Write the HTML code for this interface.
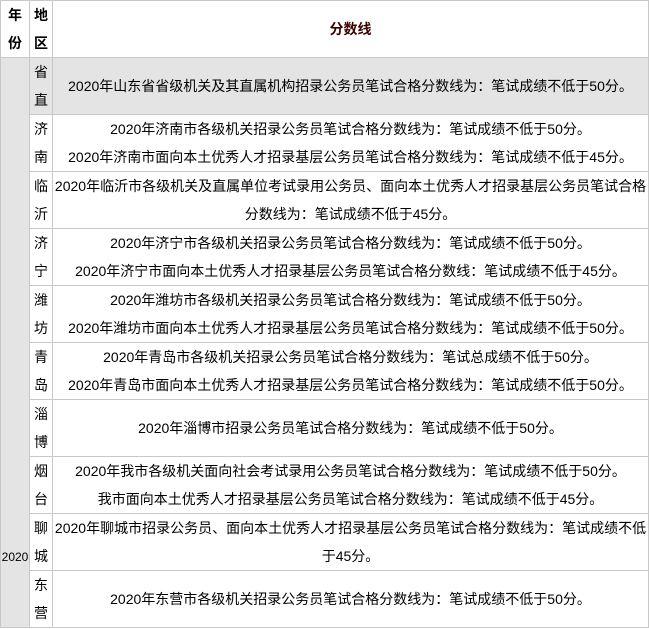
<!DOCTYPE html>
<html><head><meta charset="utf-8"><style>
body{margin:0;background:#fff;font-family:"Liberation Sans","Noto Sans CJK SC",sans-serif;font-size:14px;color:#000}
table{border-collapse:collapse;position:absolute;left:0;top:0;width:649px;table-layout:fixed}
td{border:1px solid #c8c8c8;padding:0;height:56px;line-height:28px;text-align:center;vertical-align:middle}
td.t{padding:0 1px}
.h td{font-weight:bold;font-size:14px}
.g{background:#e4e4e4}
</style></head><body>
<table>
<col style="width:29px"><col style="width:23px"><col>
<tr class="h"><td>年<br>份</td><td>地<br>区</td><td style="color:#3a0000">分数线</td></tr>
<tr><td rowspan="10" class="g" style="vertical-align:bottom;font-size:12px;padding-bottom:56px">2020</td><td class="g">省<br>直</td><td class="g t">2020年山东省省级机关及其直属机构招录公务员笔试合格分数线为：笔试成绩不低于50分。</td></tr>
<tr><td>济<br>南</td><td class="t">2020年济南市各级机关招录公务员笔试合格分数线为：笔试成绩不低于50分。<br>2020年济南市面向本土优秀人才招录基层公务员笔试合格分数线为：笔试成绩不低于45分。</td></tr>
<tr><td>临<br>沂</td><td class="t">2020年临沂市各级机关及直属单位考试录用公务员、面向本土优秀人才招录基层公务员笔试合格分数线为：笔试成绩不低于45分。</td></tr>
<tr><td>济<br>宁</td><td class="t">2020年济宁市各级机关招录公务员笔试合格分数线为：笔试成绩不低于50分。<br>2020年济宁市面向本土优秀人才招录基层公务员笔试合格分数线：笔试成绩不低于45分。</td></tr>
<tr><td>潍<br>坊</td><td class="t">2020年潍坊市各级机关招录公务员笔试合格分数线为：笔试成绩不低于50分。<br>2020年潍坊市面向本土优秀人才招录基层公务员笔试合格分数线为：笔试成绩不低于50分。</td></tr>
<tr><td>青<br>岛</td><td class="t">2020年青岛市各级机关招录公务员笔试合格分数线为：笔试总成绩不低于50分。<br>2020年青岛市面向本土优秀人才招录基层公务员笔试合格分数线为：笔试成绩不低于50分。</td></tr>
<tr><td>淄<br>博</td><td class="t">2020年淄博市招录公务员笔试合格分数线为：笔试成绩不低于50分。</td></tr>
<tr><td>烟<br>台</td><td class="t">2020年我市各级机关面向社会考试录用公务员笔试合格分数线为：笔试成绩不低于50分。<br>我市面向本土优秀人才招录基层公务员笔试合格分数线为：笔试成绩不低于45分。</td></tr>
<tr><td>聊<br>城</td><td class="t">2020年聊城市招录公务员、面向本土优秀人才招录基层公务员笔试合格分数线为：笔试成绩不低于45分。</td></tr>
<tr><td>东<br>营</td><td class="t">2020年东营市各级机关招录公务员笔试合格分数线为：笔试成绩不低于50分。</td></tr>
</table>
</body></html>
